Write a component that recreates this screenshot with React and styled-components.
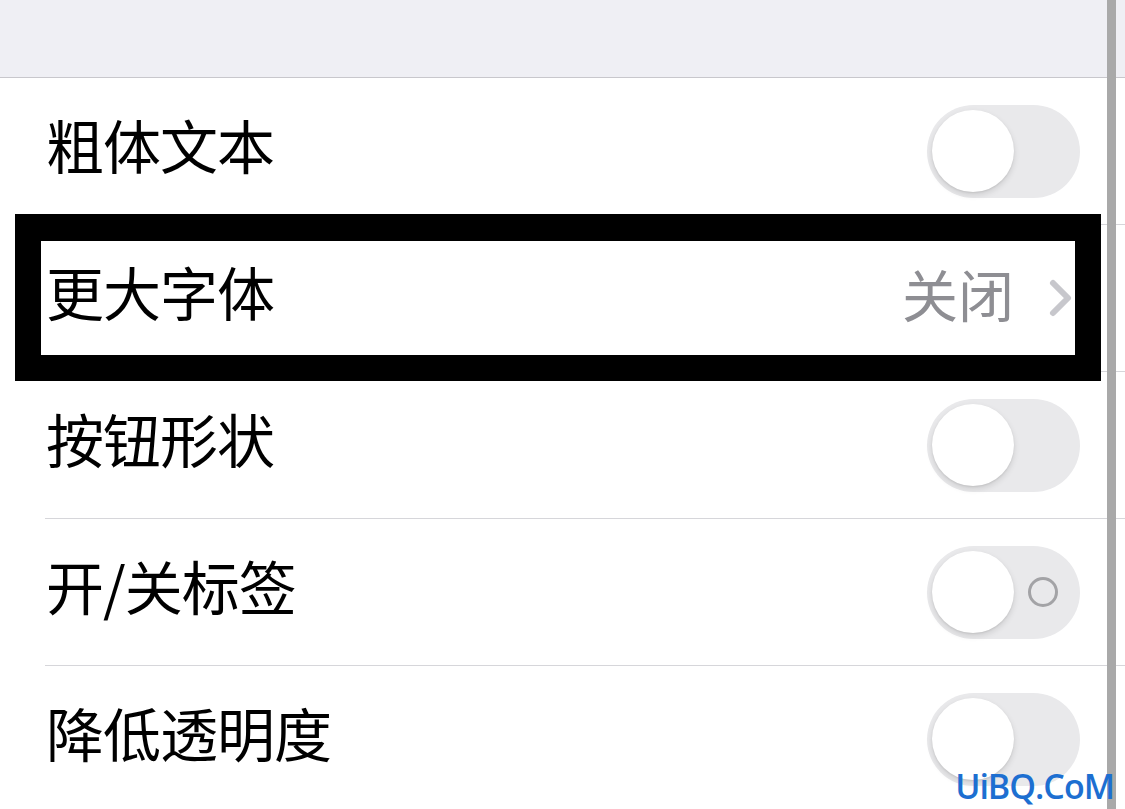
import styled, { createGlobalStyle } from "styled-components";

const GlobalStyle = createGlobalStyle`
  html, body {
    margin: 0;
    padding: 0;
    background: #ffffff;
    overflow: hidden;
  }
  body {
    font-family: "Noto Sans CJK SC", "Noto Sans", sans-serif;
  }
`;

const Screen = styled.div`
  position: relative;
  width: 1125px;
  height: 809px;
  overflow: hidden;
  background: #ffffff;
`;

const TopBand = styled.div`
  height: 77px;
  background: #efeff4;
  border-bottom: 1px solid #c8c7cc;
`;

const List = styled.ul`
  list-style: none;
  margin: 0;
  padding: 0 0 0 45px;
`;

const Row = styled.li`
  display: flex;
  align-items: center;
  height: 146px;
  padding-right: 45px;
  border-bottom: ${(p) => (p.$last ? "none" : "1px solid #d6d6da")};
`;

const Label = styled.span`
  flex: 1;
  padding-left: 1px;
  padding-bottom: 14px;
  font-size: 58px;
  line-height: 1;
  color: #000000;
  letter-spacing: -1px;
`;

const Value = styled.span`
  padding-bottom: 10px;
  font-size: 56px;
  line-height: 1;
  color: #8e8e93;
  margin-right: 34px;
`;

const Track = styled.div`
  width: 153px;
  height: 93px;
  border-radius: 47px;
  background: #e9e9eb;
  box-sizing: border-box;
  display: flex;
  align-items: center;
  padding-left: 5px;
`;

const Knob = styled.div`
  width: 82px;
  height: 82px;
  border-radius: 50%;
  background: #ffffff;
  box-shadow: 0 3px 6px rgba(0, 0, 0, 0.12), 0 1px 2px rgba(0, 0, 0, 0.08);
`;

const OffMark = styled.div`
  width: 24px;
  height: 24px;
  border-radius: 50%;
  border: 3px solid #a3a3a6;
  margin-left: 14px;
`;

const ChevronBox = styled.span`
  display: flex;
  margin-right: 6px;
`;

const Highlight = styled.div`
  position: absolute;
  left: 15px;
  top: 214px;
  width: 1034px;
  height: 114px;
  border: 26px solid #000000;
  border-top-width: 27px;
  pointer-events: none;
`;

const ScrollBar = styled.div`
  position: absolute;
  left: 1107px;
  top: 0;
  width: 9px;
  height: 809px;
  background: #a9a9a9;
`;

const Watermark = styled.div`
  position: absolute;
  right: 11px;
  bottom: 6px;
  font-family: "Open Sans", "Liberation Sans", sans-serif;
  font-size: 34px;
  font-weight: 600;
  line-height: 1;
  color: #1d6fd1;
  letter-spacing: -1px;
`;

const Switch = ({ mark }) => (
  <Track>
    <Knob />
    {mark && <OffMark />}
  </Track>
);

const Chevron = () => (
  <ChevronBox>
    <svg width="26" height="40" viewBox="0 0 26 40">
      <path
        d="M5 5 L20 20 L5 35"
        fill="none"
        stroke="#c7c7cc"
        strokeWidth="6"
        strokeLinecap="round"
        strokeLinejoin="round"
      />
    </svg>
  </ChevronBox>
);

export default function App() {
  return (
    <Screen>
      <GlobalStyle />
      <TopBand />
      <List>
        <Row>
          <Label>粗体文本</Label>
          <Switch />
        </Row>
        <Row>
          <Label>更大字体</Label>
          <Value>关闭</Value>
          <Chevron />
        </Row>
        <Row>
          <Label>按钮形状</Label>
          <Switch />
        </Row>
        <Row>
          <Label>开/关标签</Label>
          <Switch mark />
        </Row>
        <Row $last>
          <Label>降低透明度</Label>
          <Switch />
        </Row>
      </List>
      <Highlight />
      <ScrollBar />
      <Watermark>UiBQ.CoM</Watermark>
    </Screen>
  );
}
